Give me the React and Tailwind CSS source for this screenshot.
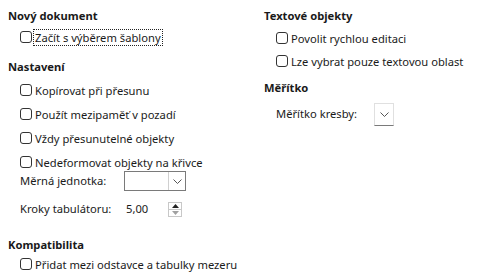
import React from 'react';

const font = { fontFamily: '"Noto Sans", "Segoe UI", sans-serif' };

function Check({ label, focused }) {
  return (
    <div className="flex items-center h-full whitespace-nowrap">
      <span className="w-[12px] h-[12px] rounded-[3px] border border-[#333] bg-white shrink-0" />
      <span
        className={`ml-[2px] leading-[15px] px-[1px] ${focused ? 'outline outline-1 outline-dotted outline-[#222]' : ''}`}
      >
        {label}
      </span>
    </div>
  );
}

function Heading({ children, className = '' }) {
  return <div className={`flex items-center font-bold whitespace-nowrap ${className}`}>{children}</div>;
}

function Chevron({ className = '' }) {
  return (
    <svg width="9" height="5" viewBox="0 0 9 5" className={className}>
      <path d="M0.5 0.5 L4.5 4.5 L8.5 0.5" fill="none" stroke="#555" strokeWidth="1" />
    </svg>
  );
}

export default function App() {
  return (
    <div className="w-[477px] h-[280px] bg-white text-[11.2px] text-[#1a1a1a] flex overflow-hidden" style={font}>
      {/* left column */}
      <div className="w-[264px] pl-[8px] pt-[6px] flex flex-col">
        <Heading className="h-[20px]">Nový dokument</Heading>
        <div className="h-[22px] pl-[12px]">
          <Check label="Začít s výběrem šablony" focused />
        </div>

        <Heading className="h-[20px] mt-[9px]">Nastavení</Heading>
        <div className="mt-[1px] pl-[12px] flex flex-col">
          {['Kopírovat při přesunu', 'Použít mezipaměť v pozadí', 'Vždy přesunutelné objekty', 'Nedeformovat objekty na křivce'].map(t => (
            <div key={t} className="h-[24px]">
              <Check label={t} />
            </div>
          ))}
        </div>

        <div className="h-[22px] mt-[-4px] pl-[12px] flex items-center">
          <span className="w-[104px]">Měrná jednotka:</span>
          <div className="w-[62px] h-[20px] border border-[#7a7a7a] bg-white flex justify-end">
            <div className="w-[17px] h-full border-l border-[#d0d0d0] flex items-center justify-center">
              <Chevron />
            </div>
          </div>
        </div>

        <div className="h-[22px] mt-[6px] pl-[12px] flex items-center">
          <span className="w-[104px]">Kroky tabulátoru:</span>
          <div className="w-[58px] h-[19px] bg-white flex items-center">
            <span className="pl-[2px] flex-1">5,00</span>
            <div className="w-[14px] h-[15px] flex flex-col border border-[#c8c8c8]">
              <div className="flex-1 flex items-center justify-center border-b border-[#c8c8c8]">
                <svg width="7" height="4" viewBox="0 0 7 4"><path d="M0 4 L3.5 0 L7 4 Z" fill="#222" /></svg>
              </div>
              <div className="flex-1 flex items-center justify-center">
                <svg width="7" height="4" viewBox="0 0 7 4"><path d="M0 0 L3.5 4 L7 0 Z" fill="#a0a0a0" /></svg>
              </div>
            </div>
          </div>
        </div>

        <Heading className="h-[18px] mt-[16px]">Kompatibilita</Heading>
        <div className="h-[20px] pl-[12px]">
          <Check label="Přidat mezi odstavce a tabulky mezeru" />
        </div>
      </div>

      {/* right column */}
      <div className="flex-1 pt-[6px] flex flex-col">
        <Heading className="h-[20px]">Textové objekty</Heading>
        <div className="h-[22px] mt-[1px] pl-[12px]">
          <Check label="Povolit rychlou editaci" />
        </div>
        <div className="h-[22px] mt-[1px] pl-[12px]">
          <Check label="Lze vybrat pouze textovou oblast" />
        </div>

        <Heading className="h-[20px] mt-[6px]">Měřítko</Heading>
        <div className="h-[24px] mt-[4px] pl-[12px] flex items-center">
          <span className="w-[98px]">Měřítko kresby:</span>
          <div className="w-[20px] h-[23px] bg-white border border-[#e0e0e0] border-b-[#7a7a7a] flex items-center justify-center">
            <Chevron />
          </div>
        </div>
      </div>
    </div>
  );
}
